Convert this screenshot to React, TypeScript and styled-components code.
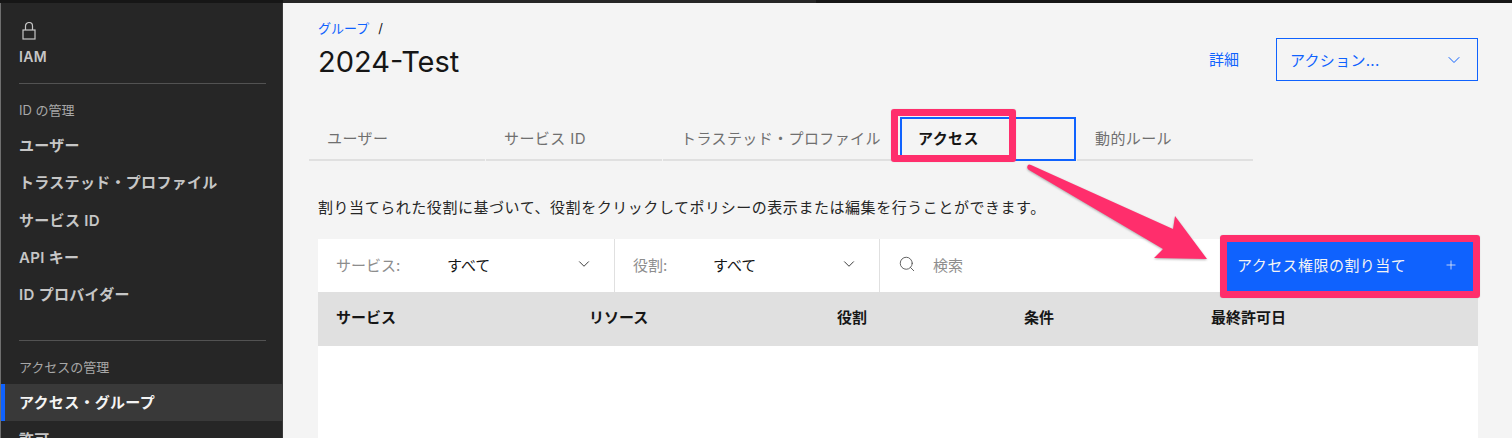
import React from "react";
import styled, { createGlobalStyle } from "styled-components";
import { ChevronDown, Plus, Search } from "lucide-react";

const FONT = `Inter, "Noto Sans CJK JP", sans-serif`;

const GlobalStyle = createGlobalStyle`
    html, body {
        margin: 0;
        padding: 0;
        height: 438px;
        overflow: hidden;
        background: #f4f4f4;
        font-family: ${FONT};
    }
`;

const Page = styled.div`
    position: relative;
    width: 1512px;
    height: 438px;
    overflow: hidden;
    display: flex;
    flex-direction: column;
`;

const TopBar = styled.div`
    flex: 0 0 3px;
    background: linear-gradient(to right, #161616 283px, #262626 283px, #262626 816px, #161616 816px);
`;

const Body = styled.div`
    flex: 1;
    display: flex;
    min-height: 0;
`;

const Sidebar = styled.nav`
    flex: 0 0 283px;
    box-sizing: border-box;
    background: #262626;
    border-left: 1px solid #6f6f6f;
    border-right: 1px solid #393939;
    padding-top: 19px;
    overflow: hidden;
`;

const SideHead = styled.div`
    padding: 0 0 0 18px;
    height: 61px;
    color: #c6c6c6;
    svg {
        display: block;
        margin-left: 3px;
    }
`;

const SideTitle = styled.div`
    margin-top: 7px;
    font-size: 14px;
    line-height: 20px;
    font-weight: 600;
    letter-spacing: 0.4px;
`;

const SideRule = styled.div`
    height: 1px;
    margin: 0 16px 0 18px;
    background: #525252;
`;

const SideGroup = styled.div`
    height: 37px;
    padding-left: 18px;
    font-size: 13px;
    line-height: 52px;
    color: #a8a8a8;
`;

const SideList = styled.div<{ $spaced?: boolean }>`
    padding-top: 6px;
    padding-bottom: ${(p) => (p.$spaced ? "26.5px" : "0")};
`;

const SideItem = styled.a<{ $active?: boolean }>`
    display: block;
    height: 37.3px;
    line-height: 37.3px;
    box-sizing: border-box;
    padding-left: ${(p) => (p.$active ? "14px" : "18px")};
    border-left: ${(p) => (p.$active ? "4px solid #0f62fe" : "none")};
    background: ${(p) => (p.$active ? "#393939" : "transparent")};
    color: ${(p) => (p.$active ? "#f4f4f4" : "#c6c6c6")};
    font-size: 15px;
    font-weight: 600;
    letter-spacing: 0.3px;
    white-space: nowrap;
`;

const Main = styled.main`
    flex: 1;
    min-width: 0;
    padding: 17px 34px 0 26px;
    background: #f4f4f4;
`;

const HeaderRow = styled.div`
    display: flex;
    align-items: flex-start;
    padding-left: 9px;
    height: 97px;
`;

const TitleBlock = styled.div`
    flex: 1;
`;

const Breadcrumb = styled.div`
    display: flex;
    gap: 9px;
    margin-top: -1px;
    font-size: 13px;
    line-height: 18px;
    color: #161616;
    a {
        color: #0f62fe;
    }
`;

const Title = styled.h1`
    margin: 7px 0 0;
    font-size: 29px;
    line-height: 36px;
    font-weight: 400;
    color: #161616;
`;

const DetailLink = styled.a`
    margin: 30px 37px 0 0;
    font-size: 15px;
    line-height: 20px;
    color: #0f62fe;
`;

const ActionSelect = styled.div`
    box-sizing: border-box;
    width: 202px;
    height: 43px;
    margin-top: 18px;
    padding: 0 13px 0 13px;
    display: flex;
    align-items: center;
    justify-content: space-between;
    border: 1px solid #0f62fe;
    color: #0f62fe;
    font-size: 15px;
    letter-spacing: 0.3px;
`;

const Tabs = styled.div`
    display: flex;
    gap: 1px;
    height: 44px;
`;

const Tab = styled.div<{ $width: number; $active?: boolean }>`
    box-sizing: border-box;
    width: ${(p) => p.$width}px;
    padding-left: ${(p) => (p.$active ? "16px" : "18px")};
    line-height: ${(p) => (p.$active ? "40px" : "44px")};
    font-size: 15px;
    letter-spacing: 0.4px;
    white-space: nowrap;
    color: ${(p) => (p.$active ? "#161616" : "#6f6f6f")};
    font-weight: ${(p) => (p.$active ? 600 : 400)};
    border: ${(p) => (p.$active ? "2px solid #0f62fe" : "none")};
    border-bottom: ${(p) => (p.$active ? "2px solid #0f62fe" : "2px solid #e0e0e0")};
`;

const Description = styled.p`
    margin: 37px 0 0 9px;
    font-size: 15px;
    line-height: 20px;
    letter-spacing: 0.55px;
    color: #262626;
    white-space: nowrap;
`;

const Toolbar = styled.div`
    display: flex;
    margin: 21px 0 0 9px;
    height: 53px;
    background: #fff;
`;

const FilterCell = styled.div<{ $width: number; $labelWidth: number }>`
    box-sizing: border-box;
    width: ${(p) => p.$width}px;
    padding: 0 21px 3px 18px;
    display: grid;
    grid-template-columns: ${(p) => p.$labelWidth}px 1fr auto;
    align-items: center;
    border-right: 1px solid #e0e0e0;
    font-size: 15px;
    color: #161616;
    span:first-child {
        color: #8d8d8d;
    }
    svg {
        color: #393939;
    }
`;

const SearchCell = styled.div`
    flex: 1;
    display: flex;
    align-items: center;
    gap: 17px;
    padding: 0 0 3px 18px;
    font-size: 15px;
    color: #8d8d8d;
    svg {
        color: #525252;
    }
`;

const AssignButton = styled.button`
    box-sizing: border-box;
    width: 256px;
    height: 53px;
    border: none;
    padding: 0 20px 2px 15px;
    display: flex;
    align-items: center;
    justify-content: space-between;
    background: #0f62fe;
    color: #f4f4f4;
    font-family: inherit;
    font-size: 15px;
    letter-spacing: 0.45px;
`;

const TableHead = styled.div`
    display: grid;
    grid-template-columns: 253px 248px 187px 187px 1fr;
    margin-left: 9px;
    box-sizing: border-box;
    height: 54px;
    padding: 0 0 6px 18px;
    align-items: center;
    background: #e0e0e0;
    font-size: 15px;
    font-weight: 600;
    color: #161616;
`;

const TableBody = styled.div`
    margin-left: 9px;
    height: 100px;
    background: #fff;
`;

// annotations painted on top of the screenshot
const Callout = styled.div<{ $x: number; $y: number; $w: number; $h: number }>`
    position: absolute;
    box-sizing: border-box;
    left: ${(p) => p.$x}px;
    top: ${(p) => p.$y}px;
    width: ${(p) => p.$w}px;
    height: ${(p) => p.$h}px;
    border: 7px solid #ff2e6c;
    border-radius: 3px;
    box-shadow: 0 0 1px rgba(0, 0, 0, 0.25);
`;

const ArrowLayer = styled.svg`
    position: absolute;
    left: 1020px;
    top: 160px;
    filter: drop-shadow(0 1px 1px rgba(0, 0, 0, 0.3));
`;

const LockIcon = () => (
    <svg width="14" height="18" viewBox="0 0 14 18" fill="none" stroke="currentColor" strokeWidth="1.2">
        <path d="M3.5 8V4a3.5 3.5 0 0 1 7 0v4" />
        <rect x="1" y="8" width="12" height="9" />
    </svg>
);

const identityItems = ["ユーザー", "トラステッド・プロファイル", "サービス ID", "API キー", "ID プロバイダー"];

const tabs = [
    { label: "ユーザー", width: 176 },
    { label: "サービス ID", width: 176 },
    { label: "トラステッド・プロファイル", width: 236 },
    { label: "アクセス", width: 176, active: true },
    { label: "動的ルール", width: 176 },
];

const columns = ["サービス", "リソース", "役割", "条件", "最終許可日"];

export default function App() {
    return (
        <Page>
            <GlobalStyle />
            <TopBar />
            <Body>
                <Sidebar>
                    <SideHead>
                        <LockIcon />
                        <SideTitle>IAM</SideTitle>
                    </SideHead>
                    <SideRule />
                    <SideGroup>ID の管理</SideGroup>
                    <SideList $spaced>
                        {identityItems.map((item) => (
                            <SideItem key={item}>{item}</SideItem>
                        ))}
                    </SideList>
                    <SideRule />
                    <SideGroup>アクセスの管理</SideGroup>
                    <SideList>
                        <SideItem $active>アクセス・グループ</SideItem>
                        <SideItem>許可</SideItem>
                    </SideList>
                </Sidebar>
                <Main>
                    <HeaderRow>
                        <TitleBlock>
                            <Breadcrumb>
                                <a>グループ</a>
                                <span>/</span>
                            </Breadcrumb>
                            <Title>2024-Test</Title>
                        </TitleBlock>
                        <DetailLink>詳細</DetailLink>
                        <ActionSelect>
                            アクション...
                            <ChevronDown size={20} strokeWidth={1.2} />
                        </ActionSelect>
                    </HeaderRow>
                    <Tabs>
                        {tabs.map((tab) => (
                            <Tab key={tab.label} $width={tab.width} $active={tab.active}>
                                {tab.label}
                            </Tab>
                        ))}
                    </Tabs>
                    <Description>
                        割り当てられた役割に基づいて、役割をクリックしてポリシーの表示または編集を行うことができます。
                    </Description>
                    <Toolbar>
                        <FilterCell $width={297} $labelWidth={111}>
                            <span>サービス:</span>
                            <span>すべて</span>
                            <ChevronDown size={18} strokeWidth={1.3} />
                        </FilterCell>
                        <FilterCell $width={265} $labelWidth={80}>
                            <span>役割:</span>
                            <span>すべて</span>
                            <ChevronDown size={18} strokeWidth={1.3} />
                        </FilterCell>
                        <SearchCell>
                            <Search size={18} strokeWidth={1.2} />
                            検索
                        </SearchCell>
                        <AssignButton>
                            アクセス権限の割り当て
                            <Plus size={14} strokeWidth={1.3} />
                        </AssignButton>
                    </Toolbar>
                    <TableHead>
                        {columns.map((col) => (
                            <span key={col}>{col}</span>
                        ))}
                    </TableHead>
                    <TableBody />
                </Main>
            </Body>
            <Callout $x={891} $y={109} $w={125} $h={53} />
            <Callout $x={1220} $y={235} $w={260} $h={63} />
            <ArrowLayer width="200" height="110" viewBox="0 0 200 110">
                <path
                    d="M8 5 Q6 8 9 10 L143 89 L134 98 L187 99 L155 56 L153 69 L11 5 Q9 4 8 5 Z"
                    fill="#ff2e6c"
                />
            </ArrowLayer>
        </Page>
    );
}
